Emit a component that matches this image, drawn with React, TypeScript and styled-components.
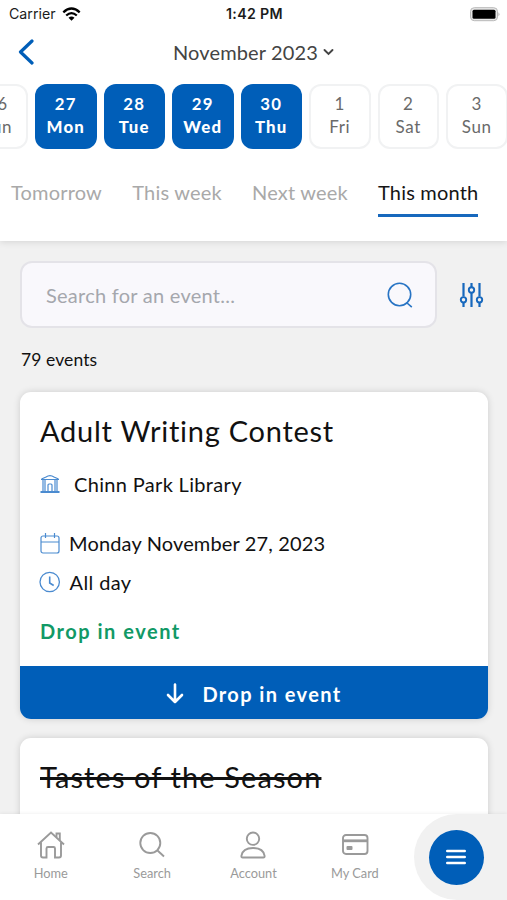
import React from "react";
import styled, { createGlobalStyle } from "styled-components";

const BLUE = "#005eb8";

const GlobalStyle = createGlobalStyle`
  * { box-sizing: border-box; }
  html, body { margin: 0; }
  body {
    font-family: Lato, "Noto Sans", sans-serif;
    font-variant-ligatures: none;
    color: #111;
  }
  button, input { font: inherit; color: inherit; border: 0; padding: 0; background: none; }
`;

const Screen = styled.div`
  width: 507px;
  height: 900px;
  display: flex;
  flex-direction: column;
  overflow: hidden;
  background: #f1f1f1;
`;

const Header = styled.header`
  flex: 0 0 241px;
  display: flex;
  flex-direction: column;
  background: #fff;
  box-shadow: 0 1px 7px rgba(0, 0, 0, 0.12);
  z-index: 1;
`;

const StatusBar = styled.div`
  height: 28px;
  display: grid;
  grid-template-columns: 1fr auto 1fr;
  align-items: center;
  padding: 0 7px 0 9px;
  font: 500 14.2px/28px Inter, Roboto, sans-serif;
  color: #1c1c1c;
`;

const Carrier = styled.span`
  display: flex;
  align-items: center;
  gap: 6px;
  font-weight: 400;
  letter-spacing: 0;
`;

const Clock = styled.span`
  font-weight: 600;
  letter-spacing: 0.35px;
`;

const Battery = styled.svg`
  justify-self: end;
`;

const TitleBar = styled.div`
  height: 56px;
  display: grid;
  grid-template-columns: 60px 1fr 60px;
  align-items: center;
  padding-bottom: 9px;
`;

const BackButton = styled.button`
  display: flex;
  padding-left: 18px;
`;

const MonthButton = styled.button`
  display: flex;
  align-items: center;
  justify-content: center;
  gap: 5px;
  font-size: 20px;
  line-height: 24px;
  letter-spacing: 0.14px;
  color: #444;
`;

const DayStrip = styled.div`
  display: flex;
  gap: 7px;
  height: 65px;
  margin-left: -33.5px;
`;

const DayCell = styled.button<{ $active?: boolean }>`
  flex: 0 0 61.5px;
  display: flex;
  flex-direction: column;
  align-items: center;
  justify-content: center;
  border-radius: 12px;
  font-size: ${(p) => (p.$active ? 16.8 : 17)}px;
  line-height: 23.5px;
  padding-bottom: 3px;
  letter-spacing: ${(p) => (p.$active ? 1.2 : 0.6)}px;
  font-weight: ${(p) => (p.$active ? 900 : 400)};
  color: ${(p) => (p.$active ? "#fff" : "#6a6a6a")};
  background: ${(p) => (p.$active ? BLUE : "#fff")};
  border: ${(p) => (p.$active ? "0" : "2px solid #f1f2f3")};
`;

const DayNumber = styled.span<{ $active?: boolean }>`
  font-weight: ${(p) => (p.$active ? 700 : 400)};
`;

const Tabs = styled.nav`
  display: flex;
  gap: 30.3px;
  padding: 29px 0 0 11px;
`;

const Tab = styled.button<{ $active?: boolean }>`
  height: 39px;
  display: flex;
  align-items: flex-start;
  font-size: 20px;
  line-height: 28px;
  letter-spacing: 0.18px;
  white-space: nowrap;
  color: ${(p) => (p.$active ? "#151515" : "#a9a9a9")};
  border-bottom: ${(p) => (p.$active ? "3px solid #1768bd" : "0")};
`;

const Content = styled.main`
  flex: 1;
  min-height: 0;
  overflow: hidden;
  padding: 20px 19px 0 20px;
`;

const SearchRow = styled.div`
  display: flex;
  align-items: center;
  gap: 22px;
`;

const SearchBox = styled.label`
  flex: 0 0 417px;
  height: 67px;
  display: flex;
  align-items: center;
  justify-content: space-between;
  padding: 0 22px 0 24px;
  border: 2px solid #e4e3e8;
  border-radius: 12px;
  background: #f9f8fc;
`;

const SearchInput = styled.input`
  width: 260px;
  outline: 0;
  font-size: 20px;
  line-height: 26px;
  letter-spacing: 0.26px;
  &::placeholder { color: #a5a7ad; opacity: 1; }
`;

const ResultCount = styled.p`
  margin: 18px 0 19px 1px;
  font-size: 17.5px;
  line-height: 27px;
  letter-spacing: 0.1px;
`;

const Card = styled.article`
  margin-bottom: 19px;
  border-radius: 11px;
  background: #fff;
  box-shadow: 0 0 7px rgba(0, 0, 0, 0.15);
  overflow: hidden;
`;

const CardBody = styled.div`
  height: 274px;
  padding: 19px 20px 0;
`;

const CardTitle = styled.h2<{ $cancelled?: boolean }>`
  margin: 0;
  font-size: 29px;
  line-height: 40px;
  font-weight: 400;
  letter-spacing: ${(p) => (p.$cancelled ? 1.1 : 0.74)}px;
  text-decoration: ${(p) => (p.$cancelled ? "line-through 2.5px" : "none")};
  width: max-content;
`;

const Detail = styled.div<{ $gap: number; $top: number; $spacing: number }>`
  display: flex;
  align-items: center;
  gap: ${(p) => p.$gap}px;
  margin-top: ${(p) => p.$top}px;
  font-size: 20px;
  line-height: 28px;
  letter-spacing: ${(p) => p.$spacing}px;
`;

const Availability = styled.p`
  margin: 21px 0 0;
  font-size: 20px;
  line-height: 28px;
  font-weight: 700;
  letter-spacing: 1.52px;
  color: #119966;
`;

const CardAction = styled.button`
  width: 100%;
  height: 53px;
  display: flex;
  align-items: center;
  justify-content: center;
  gap: 18px;
  padding-top: 2px;
  background: ${BLUE};
  color: #fff;
  font-size: 20px;
  font-weight: 700;
  letter-spacing: 1.4px;
`;

const BottomNav = styled.nav`
  flex: 0 0 86px;
  display: grid;
  grid-template-columns: repeat(4, 101.4px) 1fr;
  background: #fff;
  box-shadow: 0 -1px 3px rgba(0, 0, 0, 0.05);
  z-index: 1;
`;

const NavItem = styled.button`
  display: flex;
  flex-direction: column;
  align-items: center;
  padding-top: 17px;
  gap: 5px;
  font-size: 12.8px;
  line-height: 16px;
  color: #9a9a9a;
`;

const MenuDock = styled.div`
  margin-left: 8px;
  padding-left: 15px;
  display: flex;
  align-items: center;
  background: #f1f1f1;
  border-radius: 43px 0 0 43px;
`;

const MenuButton = styled.button`
  width: 55px;
  height: 55px;
  display: grid;
  place-items: center;
  border-radius: 50%;
  background: ${BLUE};
`;

const days = [
  { n: "26", d: "Sun" },
  { n: "27", d: "Mon", active: true },
  { n: "28", d: "Tue", active: true },
  { n: "29", d: "Wed", active: true },
  { n: "30", d: "Thu", active: true },
  { n: "1", d: "Fri" },
  { n: "2", d: "Sat" },
  { n: "3", d: "Sun" },
];

const navIcons = {
  Home: (
    <>
      <path d="M2 13.500 15 1.500 28 13.500M5 11.500V24.500q0 2 2 2h3.500V17.500q0-1.500 1.500-1.500h5.500q1.500 0 1.500 1.500v9h4q2 0 2-2V11.500" />
      <path d="M20.500 6V2.500h3.300V9.500" />
    </>
  ),
  Search: (
    <>
      <circle cx="13.300" cy="12" r="10" />
      <path d="m20.500 19.500 6.500 6" />
    </>
  ),
  Account: (
    <>
      <circle cx="15" cy="7.700" r="6.200" />
      <path d="M4.700 26.500q-1.500 0-1.300-1.700C4.200 20 8.500 17 15 17s10.800 3 11.600 7.800q.2 1.700-1.300 1.700Z" />
    </>
  ),
  "My Card": (
    <>
      <rect x="3" y="4" width="24.500" height="19" rx="3" />
      <path d="M3 9.800h24.500" strokeWidth="2.800" />
      <rect x="6.500" y="15" width="6" height="4" rx="1" fill="currentColor" stroke="none" />
    </>
  ),
};

const LibraryIcon = () => (
  <svg width="20" height="20" viewBox="0 0 20 20" fill="none" stroke="#4b8bd0" strokeWidth="1.200">
    <path d="M1.500 5 6 3Q10 .2 14 3l4.500 2M1 5.500h18M3 6v12M5 6v12M15 6v12M17 6v12" />
    <path d="M8 18v-7q0-1 1-1h2q1 0 1 1v7" />
    <path d="M.5 18h19" strokeWidth="1.800" />
  </svg>
);

const CalendarIcon = () => (
  <svg width="20" height="22" viewBox="0 0 20 22" fill="none" stroke="#4b8bd0" strokeWidth="1.200">
    <rect x="1" y="4" width="18" height="17" rx="2" />
    <path d="M1 10h18M5.500 1v5M14.500 1v5" />
  </svg>
);

const ClockIcon = () => (
  <svg width="20" height="22" viewBox="0 0 20 22" fill="none" stroke="#4b8bd0" strokeWidth="1.300" overflow="visible">
    <circle cx="9.700" cy="11" r="9.700" />
    <path d="M9.700 5.500V12l4 2.500" strokeWidth="1.600" />
  </svg>
);

export default function App() {
  return (
    <Screen>
      <GlobalStyle />
      <Header>
        <StatusBar>
          <Carrier>
            Carrier
            <svg width="19" height="15" viewBox="0 0 19 15" fill="none" stroke="#000" strokeWidth="2.300">
              <path d="M1.300 5.300Q9.500-2.300 17.700 5.300M4.200 8.500q5.300-4.800 10.600 0" />
              <path d="M6.500 10.700q3-2.400 6 0l-3 3Z" fill="#000" stroke="none" />
            </svg>
          </Carrier>
          <Clock>1:42 PM</Clock>
          <Battery width="31" height="15" viewBox="0 0 31 15">
            <rect x="1.500" y="0.700" width="27" height="13" rx="3.800" fill="#e8e8e8" stroke="#b8b8b8" />
            <rect x="3.500" y="2.700" width="23" height="9" rx="1.500" fill="#000" />
            <path d="M29.500 5.200q1.800 2 0 4Z" fill="#aaa" />
          </Battery>
        </StatusBar>
        <TitleBar>
          <BackButton aria-label="Back">
            <svg width="16" height="26" viewBox="0 0 16 26" fill="none" stroke={BLUE} strokeWidth="3.200">
              <path d="M14 2 2.500 13 14 24" strokeLinecap="round" strokeLinejoin="round" />
            </svg>
          </BackButton>
          <MonthButton>
            November 2023
            <svg width="11" height="8" viewBox="0 0 11 8" fill="none" stroke="#444" strokeWidth="1.900">
              <path d="m1.500 2 4 4 4-4" strokeLinecap="round" />
            </svg>
          </MonthButton>
        </TitleBar>
        <DayStrip>
          {days.map((day) => (
            <DayCell key={day.n} $active={day.active}>
              <DayNumber $active={day.active}>{day.n}</DayNumber>
              <span>{day.d}</span>
            </DayCell>
          ))}
        </DayStrip>
        <Tabs>
          <Tab>Tomorrow</Tab>
          <Tab>This week</Tab>
          <Tab>Next week</Tab>
          <Tab $active>This month</Tab>
        </Tabs>
      </Header>

      <Content>
        <SearchRow>
          <SearchBox>
            <SearchInput placeholder="Search for an event..." />
            <svg width="26" height="26" viewBox="0 0 26 26" fill="none" stroke="#2874c4" strokeWidth="1.600">
              <circle cx="12.500" cy="12.500" r="11.200" />
              <path d="m19.500 20.500 5.300 4.700" />
            </svg>
          </SearchBox>
          <svg width="25" height="26" viewBox="0 0 25 26" fill="none" stroke="#1768bd" strokeWidth="1.900">
            <path d="M4.500 1v13.500M4.500 20.500V25M12.500 1v4M12.500 11v14M20.500 1v13.500M20.500 20.500V25" strokeWidth="2.200" />
            <circle cx="4.500" cy="17.800" r="2.700" />
            <circle cx="12.500" cy="8" r="2.700" />
            <circle cx="20.500" cy="17.800" r="2.700" />
          </svg>
        </SearchRow>
        <ResultCount>79 events</ResultCount>

        <Card>
          <CardBody>
            <CardTitle>Adult Writing Contest</CardTitle>
            <Detail $gap={14} $top={19} $spacing={0.33}>
              <LibraryIcon />
              Chinn Park Library
            </Detail>
            <Detail $gap={9} $top={31} $spacing={0.15}>
              <CalendarIcon />
              Monday November 27, 2023
            </Detail>
            <Detail $gap={9.5} $top={11} $spacing={0.4}>
              <ClockIcon />
              All day
            </Detail>
            <Availability>Drop in event</Availability>
          </CardBody>
          <CardAction>
            <svg width="18" height="21" viewBox="0 0 18 21" fill="none" stroke="#fff" strokeWidth="2.600">
              <path d="M9 1.500v17.500M2 12l7 7 7-7" strokeLinecap="round" strokeLinejoin="round" />
            </svg>
            Drop in event
          </CardAction>
        </Card>

        <Card>
          <CardBody>
            <CardTitle $cancelled>Tastes of the Season</CardTitle>
          </CardBody>
        </Card>
      </Content>

      <BottomNav>
        {Object.entries(navIcons).map(([label, icon]) => (
          <NavItem key={label}>
            <svg width="30" height="29" viewBox="0 0 30 29" fill="none" stroke="currentColor" strokeWidth="1.900">
              {icon}
            </svg>
            {label}
          </NavItem>
        ))}
        <MenuDock>
          <MenuButton aria-label="Menu">
            <svg width="20" height="16" viewBox="0 0 20 16" stroke="#fff" strokeWidth="2.600" strokeLinecap="round">
              <path d="M1.300 2h17.400M1.300 8h17.400M1.300 14h17.400" />
            </svg>
          </MenuButton>
        </MenuDock>
      </BottomNav>
    </Screen>
  );
}
